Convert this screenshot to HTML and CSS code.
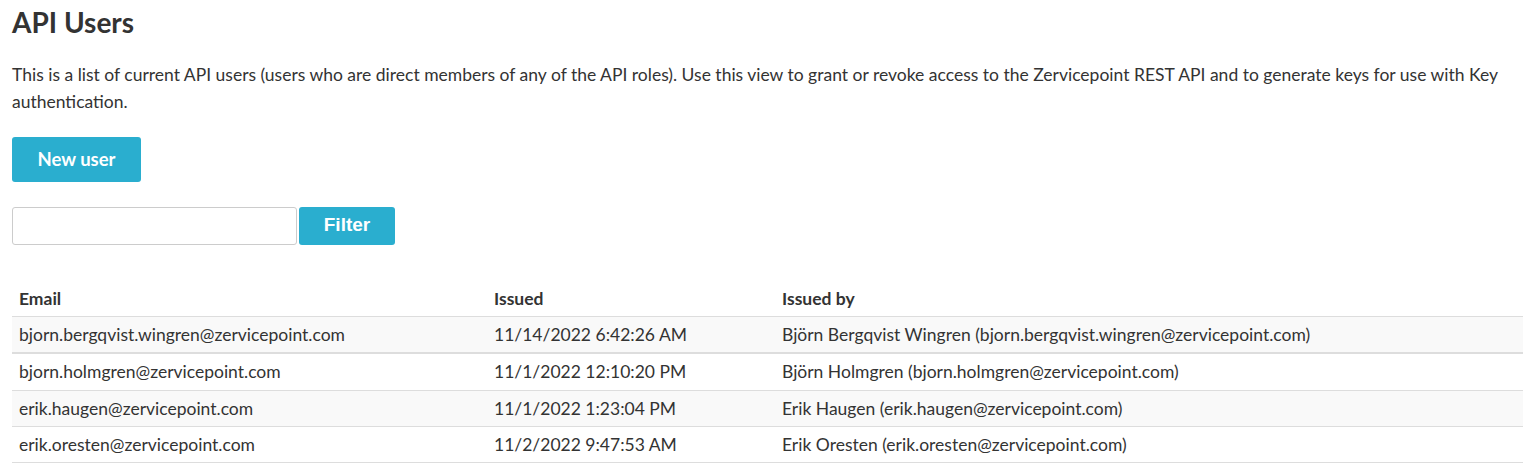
FILE: index.html
```html
<!DOCTYPE html>
<html>
<head>
<meta charset="utf-8">
<title>API Users</title>
<link rel="stylesheet" href="styles.css">
</head>
<body>
<div class="page">
  <h1 class="title">API Users</h1>
  <p class="intro">This is a list of current API users (users who are direct members of any of the API roles). Use this view to grant or revoke access to the Zervicepoint REST API and to generate keys for use with Key authentication.</p>
  <div class="actions">
    <button class="btn btn-new" type="button">New user</button>
  </div>
  <form class="filter">
    <input class="filter-input" type="text">
    <button class="btn btn-filter" type="button">Filter</button>
  </form>
  <table class="users">
    <colgroup>
      <col class="c-email">
      <col class="c-issued">
      <col class="c-by">
    </colgroup>
    <thead>
      <tr><th>Email</th><th>Issued</th><th>Issued by</th></tr>
    </thead>
    <tbody>
      <tr class="first"><td>bjorn.bergqvist.wingren@zervicepoint.com</td><td>11/14/2022 6:42:26 AM</td><td>Björn Bergqvist Wingren (bjorn.bergqvist.wingren@zervicepoint.com)</td></tr>
      <tr class="second"><td>bjorn.holmgren@zervicepoint.com</td><td>11/1/2022 12:10:20 PM</td><td>Björn Holmgren (bjorn.holmgren@zervicepoint.com)</td></tr>
      <tr class="odd"><td>erik.haugen@zervicepoint.com</td><td>11/1/2022 1:23:04 PM</td><td>Erik Haugen (erik.haugen@zervicepoint.com)</td></tr>
      <tr><td>erik.oresten@zervicepoint.com</td><td>11/2/2022 9:47:53 AM</td><td>Erik Oresten (erik.oresten@zervicepoint.com)</td></tr>
    </tbody>
  </table>
</div>
</body>
</html>
```

FILE: styles.css
```css
html, body {
  margin: 0;
  padding: 0;
  background: #fff;
}
body {
  font-family: Lato, "Open Sans", sans-serif;
  color: #333;
  font-size: 17.5px;
}
.page {
  padding: 0 0 0 12px;
}
.title {
  margin: 0;
  padding-top: 4px;
  font-size: 28px;
  line-height: 36px;
  font-weight: 700;
  color: #333;
}
.intro {
  margin: 21px 0 0;
  font-size: 17.5px;
  line-height: 27px;
  padding-right: 10px;
}
.actions {
  margin-top: 22px;
}
.btn {
  border: 0;
  border-radius: 3px;
  background: #2aaecf;
  color: #fff;
  font-weight: 700;
  cursor: pointer;
  padding: 0;
}
.btn-new {
  width: 129px;
  height: 45px;
  font-family: Lato, sans-serif;
  font-size: 18.5px;
  padding-bottom: 2px;
}
.filter {
  display: flex;
  gap: 2px;
  margin-top: 25px;
}
.filter-input {
  width: 285px;
  height: 38px;
  box-sizing: border-box;
  border: 1px solid #ccc;
  border-radius: 3px;
  margin: 0;
}
.btn-filter {
  width: 96px;
  height: 38px;
  font-family: "Liberation Sans", Arial, sans-serif;
  font-size: 19px;
  padding-bottom: 3px;
}
.users {
  margin-top: 36px;
  width: 100%;
  border-collapse: collapse;
  table-layout: fixed;
}
.c-email { width: 475px; }
.c-issued { width: 288px; }
.users th,
.users td {
  text-align: left;
  padding: 7px 7px;
  line-height: 21px;
  font-size: 17.5px;
  white-space: nowrap;
}
.users th {
  font-weight: 700;
}
.users td {
  border-top: 1px solid #ddd;
}
.users tbody tr:last-child td {
  border-bottom: 1px solid #ddd;
}
.users tr.first td {
  background: #f9f9f9;
  border-bottom: 2px solid #ddd;
}
.users tr.second td {
  padding-bottom: 8px;
}
.users tr.odd td {
  background: #f9f9f9;
}
```
